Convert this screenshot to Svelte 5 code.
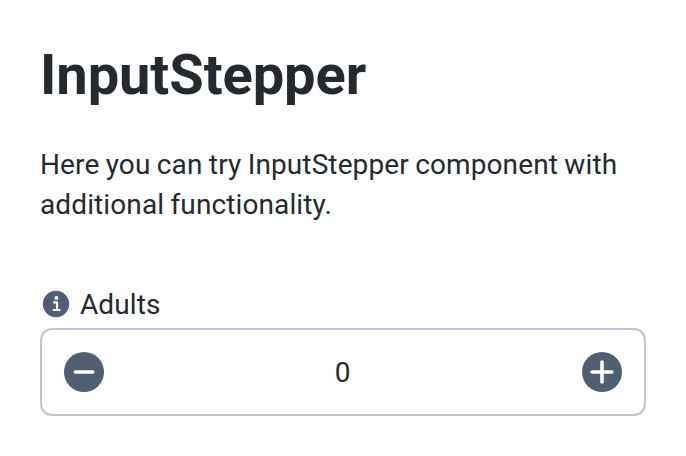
<script>
  let adults = $state(0);
</script>

<main>
  <h1>InputStepper</h1>
  <p>Here you can try InputStepper component with additional functionality.</p>
  <label for="adults">
    <svg class="info" viewBox="0 0 32 32" aria-hidden="true">
      <circle cx="16" cy="16" r="13.2" fill="#4f5e71" />
      <circle cx="16.4" cy="10" r="1.9" fill="#fff" />
      <path d="M14 14.4H17V22M13.6 22H19.6" fill="none" stroke="#fff" stroke-width="2.2" stroke-linecap="round" stroke-linejoin="round" />
    </svg>
    <span>Adults</span>
  </label>
  <div class="stepper">
    <button aria-label="Decrement" onclick={() => adults = Math.max(0, adults - 1)}>
      <svg viewBox="0 0 40 40"><path d="M11.4 20H28.8" /></svg>
    </button>
    <output id="adults">{adults}</output>
    <button aria-label="Increment" onclick={() => adults += 1}>
      <svg viewBox="0 0 40 40"><path d="M10 20H30M20 10V30" /></svg>
    </button>
  </div>
</main>

<style>
  :global(body) { background: #fff; }
  main {
    box-sizing: border-box;
    width: 686px;
    padding: 41px 40px 40px;
    font-family: Roboto, sans-serif;
    color: #252a31;
  }
  h1 { margin: 0; font-size: 56px; line-height: 68px; font-weight: 700; letter-spacing: -0.07px; }
  p { margin: 36px 0 0; font-size: 28px; line-height: 40px; letter-spacing: 0.11px; word-spacing: -0.7px; }
  label { display: flex; align-items: center; gap: 8px; height: 40px; margin-top: 59px; font-size: 28px; line-height: 40px; letter-spacing: 0.1px; }
  label span { padding-top: 2px; }
  .info { width: 32px; height: 32px; }
  .stepper {
    box-sizing: border-box;
    display: flex;
    align-items: center;
    justify-content: space-between;
    height: 88px;
    margin-top: 4px;
    padding: 0 22px;
    border: 2px solid #bac7d5;
    border-radius: 12px;
  }
  button { width: 40px; height: 40px; padding: 0; border: 0; border-radius: 50%; background: #4f5e71; }
  button svg { display: block; width: 40px; height: 40px; }
  button path { fill: none; stroke: #fff; stroke-width: 3.6; stroke-linecap: round; }
  output { padding: 2px 1px 0 0; font-size: 28px; line-height: 40px; }
</style>
